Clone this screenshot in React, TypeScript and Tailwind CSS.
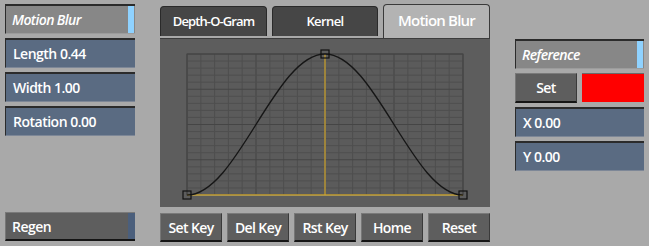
import React from "react";

const font = { fontFamily: '"Open Sans", "Liberation Sans", sans-serif' };

function Field({ label }: { label: string }) {
  return (
    <div className="h-[30px] flex items-center pl-[7px] bg-[#5a6b82] border-t-2 border-l border-[#2b2b2b] border-b border-b-[#7d8797] text-white text-[14px] tracking-[-0.5px] font-semibold">
      {label}
    </div>
  );
}

function Header({ label }: { label: string }) {
  return (
    <div className="h-[30px] flex items-stretch bg-[#878787] border-t-2 border-l border-[#2b2b2b] border-b border-b-[#9c9c9c] text-white text-[14px] tracking-[-0.6px] font-semibold italic">
      <div className="flex-1 flex items-center pl-[6px]">{label}</div>
      <div className="w-[6px] bg-[#8fd2ff] mr-px" />
    </div>
  );
}

function DarkButton({ label, className = "" }: { label: string; className?: string }) {
  return (
    <div
      className={
        "h-[29px] flex items-center justify-center bg-[#5e5e5e] border-t border-t-[#7a7a7a] border-l border-l-[#777] border-b-2 border-b-[#151515] border-r border-r-[#3a3a3a] text-white text-[14px] tracking-[-0.6px] font-semibold " +
        className
      }
    >
      {label}
    </div>
  );
}

function Graph() {
  const gx = 27, gy = 15, gw = 276, gh = 141;
  const minorV: number[] = [];
  for (let i = 0; i <= 20; i++) minorV.push(gx + (gw * i) / 20);
  const minorH: number[] = [];
  for (let i = 0; i <= 20; i++) minorH.push(gy + (gh * i) / 20);
  const px = gx + gw / 2;
  return (
    <svg width="330" height="169" viewBox="0 0 330 169" className="block">
      <rect x={gx} y={gy} width={gw} height={gh} fill="#5b5b5b" />
      {minorV.map((x, i) => (
        <line key={"v" + i} x1={x} y1={gy} x2={x} y2={gy + gh} stroke={i % 5 === 0 ? "#454545" : "#4f4f4f"} strokeWidth="1" />
      ))}
      {minorH.map((y, i) => (
        <line key={"h" + i} x1={gx} y1={y} x2={gx + gw} y2={y} stroke={i % 5 === 0 ? "#454545" : "#4f4f4f"} strokeWidth="1" />
      ))}
      <rect x={gx} y={gy} width={gw} height={gh} fill="none" stroke="#444" strokeWidth="1" />
      <line x1={gx} y1={gy + gh + 0.5} x2={gx + gw} y2={gy + gh + 0.5} stroke="#5a6f90" strokeWidth="1" />
      <line x1={gx} y1={gy + gh} x2={gx + gw} y2={gy + gh} stroke="#c9a233" strokeWidth="1.3" />
      <line x1={px} y1={gy} x2={px} y2={gy + gh} stroke="#c9a233" strokeWidth="1.3" />
      <path
        d={`M${gx},${gy + gh} C${gx + 50},${gy + gh} ${px - 50},${gy} ${px},${gy} C${px + 50},${gy} ${gx + gw - 50},${gy + gh} ${gx + gw},${gy + gh}`}
        fill="none"
        stroke="#161616"
        strokeWidth="1.4"
      />
      {[
        [gx, gy + gh],
        [px, gy],
        [gx + gw, gy + gh],
      ].map(([x, y], i) => (
        <rect key={i} x={x - 4} y={y - 4} width="8" height="8" fill="none" stroke="#111" strokeWidth="1.2" />
      ))}
    </svg>
  );
}

export default function App() {
  return (
    <div className="w-[649px] h-[246px] bg-[#a9a9a9] flex overflow-hidden" style={font}>
      {/* left column */}
      <div className="w-[130px] ml-[5px] pt-[4px] pb-[5px] flex flex-col">
        <div className="flex flex-col gap-[4px]">
          <Header label="Motion Blur" />
          <Field label="Length 0.44" />
          <Field label="Width 1.00" />
          <Field label="Rotation 0.00" />
        </div>
        <div className="mt-auto h-[29px] flex items-stretch bg-[#5e5e5e] border-t border-t-[#7a7a7a] border-l border-l-[#777] border-b-2 border-b-[#151515] text-white text-[14px] tracking-[-0.5px] font-semibold">
          <div className="flex-1 flex items-center pl-[6px]">Regen</div>
          <div className="w-[7px] bg-[#4b5f7c]" />
        </div>
      </div>

      {/* middle column */}
      <div className="w-[330px] ml-[25px] flex flex-col">
        <div className="h-[38px] flex items-end gap-[5px]">
          <div className="w-[107px] h-[30px] mb-[2px] rounded-t-[4px] bg-[#464646] border-t border-l border-r border-[#2a2a2a] flex items-center justify-center text-white text-[13px] tracking-[-0.9px] font-semibold">
            Depth-O-Gram
          </div>
          <div className="w-[106px] h-[30px] mb-[2px] rounded-t-[4px] bg-[#464646] border-t border-l border-r border-[#2a2a2a] flex items-center justify-center text-white text-[13px] tracking-[-0.6px] font-semibold">
            Kernel
          </div>
          <div className="w-[107px] h-[34px] rounded-t-[4px] bg-[#b3b3b3] border-t border-l border-r border-[#3a3a3a] flex items-center justify-center text-white text-[15px] tracking-[-0.8px] font-semibold pb-[2px]">
            Motion Blur
          </div>
        </div>
        <div className="h-[169px] bg-[#5d5d5d] border-t border-[#3c3c3c]">
          <Graph />
        </div>
        <div className="mt-[6px] flex gap-[5px]">
          <DarkButton label="Set Key" className="w-[62px]" />
          <DarkButton label="Del Key" className="w-[62px]" />
          <DarkButton label="Rst Key" className="w-[62px]" />
          <DarkButton label="Home" className="w-[62px]" />
          <DarkButton label="Reset" className="w-[62px]" />
        </div>
      </div>

      {/* right column */}
      <div className="w-[129px] ml-[25px] pt-[39px] flex flex-col gap-[4px]">
        <Header label="Reference" />
        <div className="flex gap-[5px]">
          <DarkButton label="Set" className="w-[62px] h-[30px]" />
          <div className="flex-1 h-[29px] bg-[#ff0000] border-t border-[#6a6a6a]" />
        </div>
        <Field label="X 0.00" />
        <Field label="Y 0.00" />
      </div>
    </div>
  );
}
